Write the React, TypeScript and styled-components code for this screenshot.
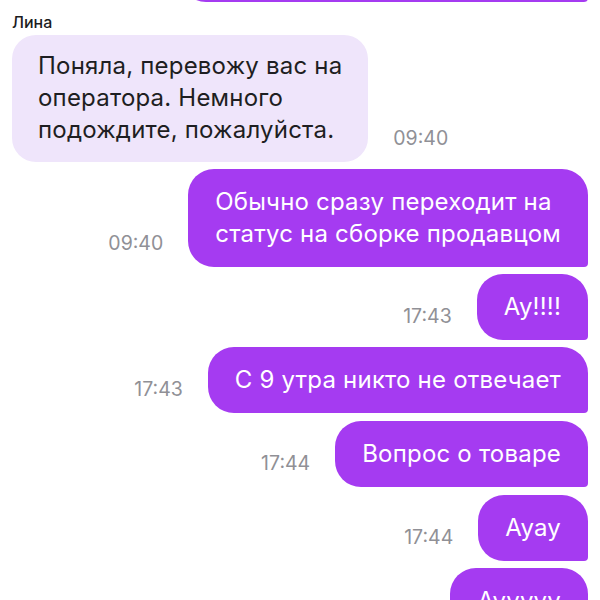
import React from "react";
import styled, { createGlobalStyle } from "styled-components";

const Global = createGlobalStyle`
  html, body { margin: 0; padding: 0; background: #ffffff; }
  body { font-family: Inter, "Noto Sans", sans-serif; -webkit-font-smoothing: antialiased; }
`;

const Screen = styled.div`
  width: 600px;
  height: 600px;
  overflow: hidden;
  display: flex;
  flex-direction: column;
  padding: 0 12px;
  box-sizing: border-box;
`;

const Row = styled.div<{ $out?: boolean; $gap?: number }>`
  display: flex;
  flex-direction: row;
  justify-content: ${(p) => (p.$out ? "flex-end" : "flex-start")};
  align-items: flex-end;
  gap: 25px;
  margin-top: ${(p) => (p.$gap ?? 7)}px;
  flex-shrink: 0;
`;

const CutRow = styled(Row)`
  margin-top: -64px;
`;

const Name = styled.div`
  font-size: 16px;
  font-weight: 500;
  color: #1c1c1e;
  line-height: 20px;
  margin-top: 10px;
  flex-shrink: 0;
`;

const Bubble = styled.div<{ $out?: boolean }>`
  font-size: 24px;
  line-height: 32px;
  letter-spacing: 0.2px;
  padding: 17px 27px;
  white-space: pre-line;
  background: ${(p) => (p.$out ? "#a53bf1" : "#efe5fb")};
  color: ${(p) => (p.$out ? "#ffffff" : "#1e1e22")};
  border-radius: ${(p) => (p.$out ? "26px 26px 4px 26px" : "24px")};
`;

const InBubble = styled(Bubble)`
  padding: 15px 26px 16px;
`;

const Time = styled.span`
  font-size: 19.5px;
  color: #909096;
  line-height: 22px;
  margin-bottom: 13px;
`;

const App: React.FC = () => (
  <>
    <Global />
    <Screen>
      <CutRow $out $gap={0}>
        <Bubble $out style={{ width: 354 }}>{"\u00a0"}</Bubble>
      </CutRow>
      <Name>Лина</Name>
      <Row $gap={3}>
        <InBubble>{"Поняла, перевожу вас на\nоператора. Немного\nподождите, пожалуйста."}</InBubble>
        <Time>09:40</Time>
      </Row>
      <Row $out>
        <Time>09:40</Time>
        <Bubble $out>{"Обычно сразу переходит на\nстатус на сборке продавцом"}</Bubble>
      </Row>
      <Row $out>
        <Time>17:43</Time>
        <Bubble $out>Ау!!!!</Bubble>
      </Row>
      <Row $out>
        <Time>17:43</Time>
        <Bubble $out>С 9 утра никто не отвечает</Bubble>
      </Row>
      <Row $out $gap={8}>
        <Time>17:44</Time>
        <Bubble $out>Вопрос о товаре</Bubble>
      </Row>
      <Row $out $gap={8}>
        <Time>17:44</Time>
        <Bubble $out>Ауау</Bubble>
      </Row>
      <Row $out>
        <Bubble $out>Аууууу</Bubble>
      </Row>
    </Screen>
  </>
);

export default App;
